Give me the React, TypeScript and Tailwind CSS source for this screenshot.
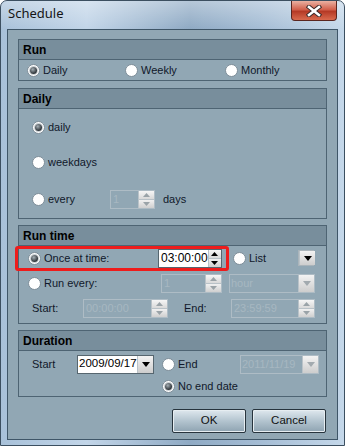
import React from "react";

const Radio = ({ checked }: { checked?: boolean }) => (
  <span className="inline-flex w-[13px] h-[13px] rounded-full bg-white border border-[#7d8d98] items-center justify-center shrink-0">
    {checked && (
      <span className="w-[7px] h-[7px] rounded-full bg-[radial-gradient(circle_at_40%_35%,#a5afb5,#2b3136_70%)] shadow-[0_0_0_1px_#c9cfd3]" />
    )}
  </span>
);

const Tri = ({ up, color }: { up?: boolean; color: string }) => (
  <svg width="7" height="4" viewBox="0 0 7 4">
    <path d={up ? "M0 4L3.5 0L7 4Z" : "M0 0L7 0L3.5 4Z"} fill={color} />
  </svg>
);

const SpinButtons = ({ enabled }: { enabled?: boolean }) => (
  <div className="w-[16px] flex flex-col border-l border-[#b9c2c8]">
    <div className="flex-1 flex items-center justify-center bg-gradient-to-b from-[#f6f6f6] to-[#d9d9d9] border-b border-[#b9c2c8]">
      <Tri up color={enabled ? "#000" : "#9aa3a8"} />
    </div>
    <div className="flex-1 flex items-center justify-center bg-gradient-to-b from-[#f1f1f1] to-[#cfcfcf]">
      <Tri color={enabled ? "#000" : "#9aa3a8"} />
    </div>
  </div>
);

const Spin = ({ className, text, enabled }: { className: string; text: string; enabled?: boolean }) => (
  <div
    className={
      "flex h-[19px] border " +
      (enabled ? "border-[#56666f] " : "border-[#aebcc5] ") +
      className
    }
  >
    <div
      className={
        "flex-1 flex items-center pl-[2px] " +
        (enabled ? "bg-white text-black text-[12px]" : "text-[#a7b7c1] text-[11px]")
      }
    >
      {text}
    </div>
    <SpinButtons enabled={enabled} />
  </div>
);

const DropBtn = ({ enabled }: { enabled?: boolean }) => (
  <div className="w-[16px] h-full flex items-center justify-center bg-gradient-to-b from-[#f3f3f3] to-[#cdcdcd] border-l border-[#b9c2c8]">
    <svg width="8" height="5" viewBox="0 0 8 5">
      <path d="M0 0L8 0L4 5Z" fill={enabled ? "#000" : "#a2aaaf"} />
    </svg>
  </div>
);

const Combo = ({ className, text, enabled }: { className: string; text: string; enabled?: boolean }) => (
  <div
    className={
      "flex h-[19px] border " +
      (enabled ? "border-[#56666f] " : "border-[#aebcc5] ") +
      className
    }
  >
    <div
      className={
        "flex-1 flex items-center pl-[1px] overflow-hidden whitespace-nowrap " +
        (enabled ? "bg-white text-black text-[11.5px]" : "text-[#a7b7c1] text-[11px]")
      }
    >
      {text}
    </div>
    <DropBtn enabled={enabled} />
  </div>
);

const Group = ({
  title,
  className,
  children,
}: {
  title: string;
  className: string;
  children: React.ReactNode;
}) => (
  <div className={"w-[309px] border border-[#4e6473] flex flex-col " + className}>
    <div className="h-[20px] shrink-0 bg-[#788e9c] border-b border-[#4e6473] flex items-center pl-[4px] text-[12px] font-bold text-black">
      {title}
    </div>
    <div className="flex-1 relative">{children}</div>
  </div>
);

const Btn = ({ label }: { label: string }) => (
  <div className="w-[74px] h-[24px] border border-[#27343d] rounded-[2px] flex items-center justify-center text-[11.5px] text-[#111] bg-gradient-to-b from-[#dfe8ee] via-[#b3c4cf] to-[#8ea3b1] shadow-[inset_0_0_0_1px_#e6edf1]">
    {label}
  </div>
);

export default function App() {
  return (
    <div className="w-[345px] h-[446px] relative overflow-hidden rounded-t-[7px] border border-[#3c4f60] bg-[linear-gradient(to_right,#a8c1d9,#c2d5e8_25%,#8faac4_55%,#a4bcd4_75%,#c5d8ea)] font-['Liberation_Sans',Arial,sans-serif] text-[#10182a]">
      {/* title bar */}
      <div className="h-[28px] flex items-center pl-[7px] pb-[2px] text-[13px] text-[#141414] font-['Noto_Sans',sans-serif] bg-[linear-gradient(to_bottom,rgba(255,255,255,0.35),rgba(255,255,255,0))]">
        Schedule
      </div>
      <div className="absolute top-0 right-[7px] w-[46px] h-[20px] rounded-b-[4px] border border-[#5a2620] border-t-0 bg-[linear-gradient(to_bottom,#eab1a2,#d2604c_45%,#b53a26_55%,#d96a4e)] flex items-center justify-center">
        <svg width="16" height="12" viewBox="0 0 16 12">
          <path d="M3 2L13 10M13 2L3 10" stroke="#3b2a2a" strokeWidth="4.5" strokeLinecap="square" />
          <path d="M3 2L13 10M13 2L3 10" stroke="#fff" strokeWidth="2.6" strokeLinecap="square" />
        </svg>
      </div>

      {/* client area */}
      <div className="mx-[6px] h-[411px] border border-[#3f5668] bg-[#91a7b4] pl-[10px] pt-[9px] flex flex-col text-[11px]">
        <Group title="Run" className="h-[42px]">
          <div className="h-full flex items-center pl-[8px]">
            <div className="w-[98px] flex items-center gap-[3px]">
              <Radio checked />
              <span>Daily</span>
            </div>
            <div className="w-[100px] flex items-center gap-[3px]">
              <Radio />
              <span>Weekly</span>
            </div>
            <div className="flex items-center gap-[3px]">
              <Radio />
              <span>Monthly</span>
            </div>
          </div>
        </Group>

        <Group title="Daily" className="h-[131px] mt-[7px]">
          <div className="flex flex-col pl-[13px] pt-[8px]">
            <div className="h-[20px] flex items-center gap-[3px]">
              <Radio checked />
              <span>daily</span>
            </div>
            <div className="h-[20px] mt-[15px] flex items-center gap-[3px]">
              <Radio />
              <span>weekdays</span>
            </div>
            <div className="h-[20px] mt-[17px] flex items-center">
              <div className="w-[78px] flex items-center gap-[3px]">
                <Radio />
                <span>every</span>
              </div>
              <Spin className="w-[45px]" text="1" />
              <span className="ml-[8px]">days</span>
            </div>
          </div>
        </Group>

        <Group title="Run time" className="h-[99px] mt-[6px]">
          <div className="flex flex-col pl-[9px] pt-[2px]">
            <div className="h-[20px] flex items-center relative">
              <div className="absolute left-[-13px] top-[-2px] w-[214px] h-[25px] border-[3px] border-[#ee1c1c] rounded-[3px]" />
              <div className="w-[130px] flex items-center gap-[3px]">
                <Radio checked />
                <span>Once at time:</span>
              </div>
              <Spin className="w-[64px]" text="03:00:00" enabled />
              <div className="ml-[11px] w-[65px] flex items-center gap-[3px]">
                <Radio />
                <span>List</span>
              </div>
              <div className="w-[16px] h-[16px] border border-[#aab4ba]">
                <DropBtn enabled />
              </div>
            </div>
            <div className="h-[20px] mt-[5px] flex items-center">
              <div className="w-[133px] flex items-center gap-[3px]">
                <Radio />
                <span>Run every:</span>
              </div>
              <Spin className="w-[61px]" text="1" />
              <Combo className="w-[86px] ml-[7px]" text="hour" />
            </div>
            <div className="h-[20px] mt-[5px] flex items-center pl-[4px]">
              <span className="w-[51px]">Start:</span>
              <Spin className="w-[85px]" text="00:00:00" />
              <span className="ml-[16px] w-[47px]">End:</span>
              <Spin className="w-[84px]" text="23:59:59" />
            </div>
          </div>
        </Group>

        <Group title="Duration" className="h-[67px] mt-[6px]">
          <div className="flex flex-col pl-[13px] pt-[3px]">
            <div className="h-[20px] flex items-center">
              <span className="w-[45px]">Start</span>
              <Combo className="w-[77px]" text="2009/09/17" enabled />
              <div className="ml-[8px] w-[78px] flex items-center gap-[3px]">
                <Radio />
                <span>End</span>
              </div>
              <Combo className="w-[79px]" text="2011/11/19" />
            </div>
            <div className="h-[20px] mt-[2px] flex items-center gap-[3px] pl-[130px]">
              <Radio checked />
              <span>No end date</span>
            </div>
          </div>
        </Group>

        <div className="w-[308px] mt-[12px] flex justify-end gap-[6px]">
          <Btn label="OK" />
          <Btn label="Cancel" />
        </div>
      </div>
    </div>
  );
}
